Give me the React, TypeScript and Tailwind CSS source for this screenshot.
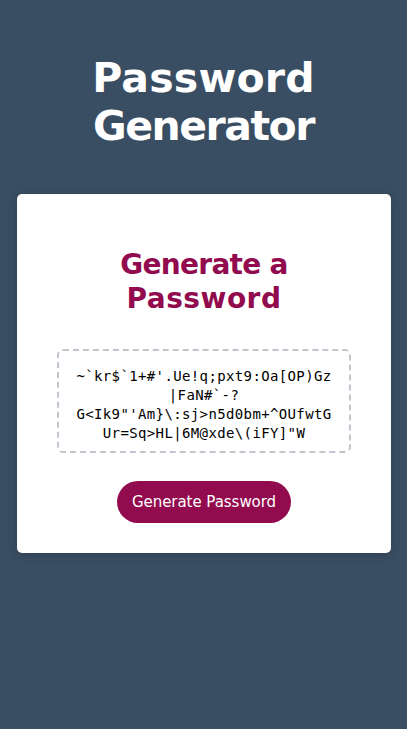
const passwordLines = [
  "~`kr$`1+#'.Ue!q;pxt9:Oa[OP)Gz",
  "|FaN#`-?",
  "G<Ik9\"'Am}\\:sj>n5d0bm+^OUfwtG",
  "Ur=Sq>HL|6M@xde\\(iFY]\"W",
];

export default function App() {
  return (
    <main className="flex min-h-screen flex-col bg-[#3a4e63] px-4 font-['DejaVu_Sans',sans-serif]">
      <h1 className="pt-[54px] text-center text-[41px] leading-[48px] font-bold text-white">
        <span className="block tracking-[0.2px]">Password</span>
        <span className="block tracking-[-1.5px]">Generator</span>
      </h1>
      <section className="mt-11 ml-px flex h-[359px] w-[374px] flex-col items-center rounded-[5px] bg-white pt-[54px] shadow-[0_2px_10px_rgba(0,0,0,0.2)]">
        <h2 className="text-center text-[28px] leading-[34px] font-bold text-[#920b4e]">
          <span className="block tracking-[-0.7px]">Generate a</span>
          <span className="block tracking-[0.5px]">Password</span>
        </h2>
        <output className="mt-[33px] block h-[104px] w-[294px] rounded-md border-2 border-dashed border-[#c1c5ce] pt-4 text-center font-['DejaVu_Sans_Mono',monospace] text-[14px] leading-[19px] tracking-[0.37px] whitespace-pre text-black">
          {passwordLines.map((line) => (
            <span key={line} className="block">{line}</span>
          ))}
        </output>
        <button type="button" className="mt-7 h-[42px] w-[174px] rounded-[21px] bg-[#920b4e] text-[15px] tracking-[-0.04px] whitespace-nowrap text-white">
          Generate Password
        </button>
      </section>
    </main>
  );
}
